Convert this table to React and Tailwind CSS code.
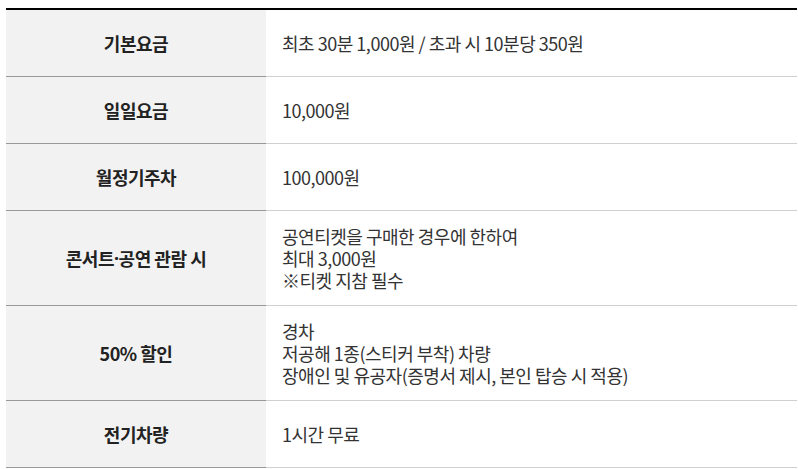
const rows = [
  { label: "기본요금", lines: ["최초 30분 1,000원 / 초과 시 10분당 350원"] },
  { label: "일일요금", lines: ["10,000원"] },
  { label: "월정기주차", lines: ["100,000원"] },
  {
    label: (
      <>
        콘서트<span style={{ fontFamily: '"Noto Sans", sans-serif' }}>·</span>공연 관람 시
      </>
    ),
    key: "concert",
    lines: ["공연티켓을 구매한 경우에 한하여", "최대 3,000원", "※티켓 지참 필수"],
  },
  {
    label: "50% 할인",
    lines: [
      "경차",
      "저공해 1종(스티커 부착) 차량",
      "장애인 및 유공자(증명서 제시, 본인 탑승 시 적용)",
    ],
  },
  { label: "전기차량", lines: ["1시간 무료"] },
];

export default function App() {
  return (
    <div
      className="bg-white w-[798px] h-[469px] pt-2 pl-[6px] pr-px tracking-[-0.03em]"
      style={{ fontFamily: '"Noto Sans CJK KR", "Noto Sans", sans-serif' }}
    >
      <div className="border-t-2 border-black">
        {rows.map((row) => (
          <div key={row.key || row.label} className="flex">
            <div className="w-[260px] shrink-0 bg-[#f2f2f2] border-b border-[#999] flex items-center justify-center text-[18px] font-bold text-[#222]">
              {row.label}
            </div>
            <div
              className={`flex-1 border-b border-[#d0d0d0] pl-4 flex items-center text-[18px] leading-[22px] text-[#333] ${
                row.lines.length > 1 ? "h-[95px]" : "h-[67px]"
              }`}
            >
              <p>
                {row.lines.map((l, i) => (
                  <span key={l}>
                    {i > 0 && <br />}
                    {l}
                  </span>
                ))}
              </p>
            </div>
          </div>
        ))}
      </div>
    </div>
  );
}
